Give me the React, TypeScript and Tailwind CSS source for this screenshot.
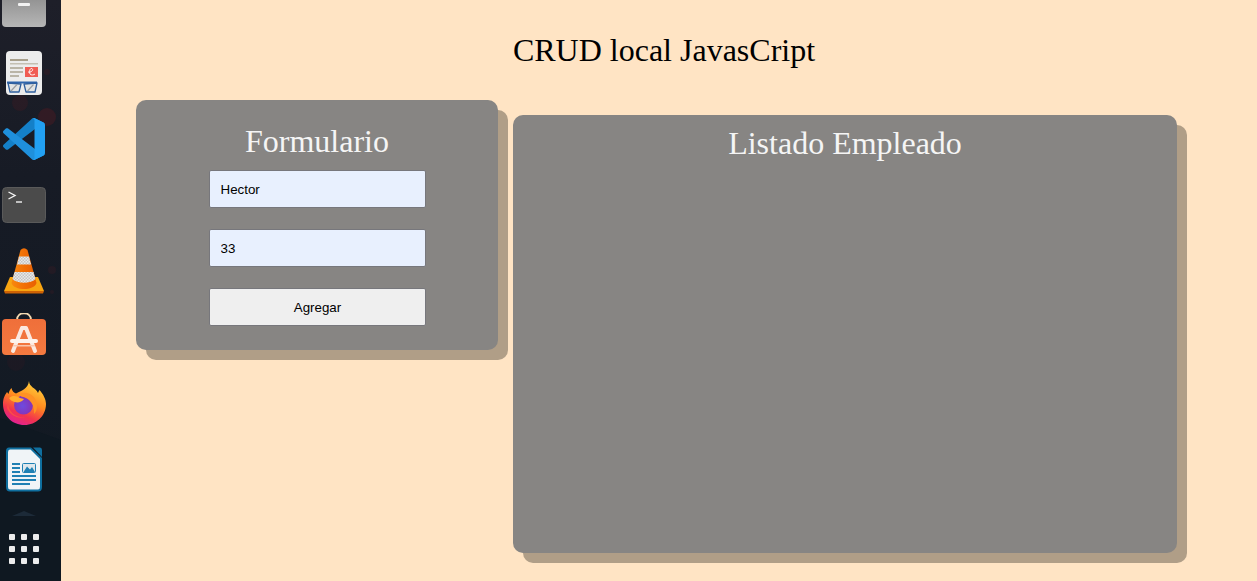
const Dock = () => {
  return (
    <aside className="relative w-[61px] h-[581px] shrink-0 overflow-hidden bg-[#131a24] flex flex-col">
      <svg className="absolute left-0 top-0" width="61" height="581" viewBox="0 0 61 581">
        <defs>
          <linearGradient id="wall" x1="0" y1="0" x2="0" y2="1">
            <stop offset="0" stopColor="#1e1f29" />
            <stop offset="0.3" stopColor="#171b25" />
            <stop offset="0.7" stopColor="#131a24" />
            <stop offset="1" stopColor="#10181f" />
          </linearGradient>
        </defs>
        <rect width="61" height="581" fill="url(#wall)" />
        <circle cx="20" cy="103" r="8" fill="#4a1a22" opacity="0.3" />
        <circle cx="47" cy="117" r="9" fill="#4a1a22" opacity="0.5" />
        <circle cx="47" cy="72" r="3" fill="#4a1a22" opacity="0.3" />
        <circle cx="52" cy="270" r="4" fill="#4a1a22" opacity="0.25" />
        <circle cx="52" cy="292" r="2" fill="#4a1a22" opacity="0.25" />
        <circle cx="16" cy="362" r="9" fill="#3a1a22" opacity="0.2" />
        <path d="M0 418 L61 440 V581 H0Z" fill="#0f1821" />
        <path d="M12 516 L24 511 L36 516Z" fill="#1c2a38" />
      </svg>

      {/* files */}
      <div className="relative h-[66px] w-[48px] mt-[-26px] pt-[9px] shrink-0 flex items-start justify-center">
        <svg width="44" height="44" viewBox="2 -17 44 44">
          <defs>
            <linearGradient id="g1" x1="0" y1="0" x2="0" y2="1">
              <stop offset="0" stopColor="#7f7f7f" />
              <stop offset="1" stopColor="#b6b6b6" />
            </linearGradient>
          </defs>
          <rect x="2" y="-17" width="44" height="44" rx="4" fill="url(#g1)" />
          <rect x="18" y="3" width="12" height="3" rx="1" fill="#f2f2f2" />
        </svg>
      </div>

      {/* document viewer */}
      <div className="relative h-[66px] w-[48px] shrink-0 flex items-center justify-center">
        <svg width="36" height="44" viewBox="6 51 36 44">
          <rect x="6" y="51" width="36" height="44" rx="4" fill="#ececec" />
          <rect x="10" y="59" width="18" height="2" fill="#a89f8b" />
          <rect x="10" y="63" width="28" height="1.500" fill="#c4bfb2" />
          <rect x="10" y="67" width="13" height="2" fill="#bab5a7" />
          <rect x="10" y="71" width="13" height="2" fill="#bab5a7" />
          <rect x="10" y="75" width="9" height="2" fill="#bab5a7" />
          <rect x="25" y="67" width="13" height="10" fill="#f05c52" />
          <path d="M28 72 C31 73 34 70 32 68.5 C30 68 29 71 30 74 C31 75.5 34 75 35 74" fill="none" stroke="#fff" strokeWidth="0.9" />
          <path d="M7 82.5 H37" stroke="#2f66ae" strokeWidth="2" />
          <path d="M8 83 L10 92 H19 L21 84 Z M24 84 L26 92 H35 L37 83 Z" fill="#e2e4e4" stroke="#2f5f9e" strokeWidth="1.300" strokeLinejoin="round" />
          <path d="M11 91 L17 84.500 M27.500 91 L33.500 84.500" stroke="#9a9ea2" strokeWidth="1.200" />
        </svg>
      </div>

      {/* vs code */}
      <div className="relative h-[66px] w-[48px] shrink-0 flex items-center justify-center">
        <svg width="42" height="42" viewBox="0 0 100 100">
          <path
            d="M96.46 10.8 L75.86 0.88 C73.47 -0.27 70.62 0.21 68.75 2.08 L1.3 63.58 C-0.52 65.24 -0.51 68.09 1.3 69.75 L6.81 74.75 C8.3 76.1 10.53 76.2 12.13 74.99 L93.36 13.37 C96.09 11.3 100 13.25 100 16.67 V16.43 C100 14.03 98.62 11.84 96.46 10.8 Z"
            fill="#1480c8"
          />
          <path
            d="M96.46 89.2 L75.86 99.12 C73.47 100.27 70.62 99.79 68.75 97.92 L1.3 36.42 C-0.52 34.76 -0.51 31.91 1.3 30.25 L6.81 25.25 C8.3 23.9 10.53 23.8 12.13 25.01 L93.36 86.63 C96.09 88.7 100 86.75 100 83.33 V83.57 C100 85.97 98.62 88.16 96.46 89.2 Z"
            fill="#1f90dc"
          />
          <path
            d="M75.86 99.13 C73.47 100.27 70.62 99.79 68.75 97.92 C71.06 100.22 75 98.59 75 95.33 V4.67 C75 1.41 71.06 -0.22 68.75 2.08 C70.62 0.21 73.47 -0.27 75.86 0.87 L96.46 10.78 C98.62 11.82 100 14.01 100 16.41 V83.59 C100 85.99 98.62 88.18 96.46 89.22 Z"
            fill="#22a0f2"
          />
        </svg>
      </div>

      {/* terminal */}
      <div className="relative h-[66px] w-[48px] shrink-0 flex items-center justify-center">
        <svg width="44" height="36" viewBox="2 187 44 36">
          <rect x="2.5" y="187.5" width="43" height="35" rx="4" fill="#4b4b4b" stroke="#5a5a5a" />
          <path d="M8.5 192 L15 195.5 L8.5 199" fill="none" stroke="#f4f4f4" strokeWidth="1.4" />
          <path d="M16 202 H22" stroke="#f4f4f4" strokeWidth="1.4" />
        </svg>
      </div>

      {/* vlc */}
      <div className="relative h-[66px] w-[48px] shrink-0 flex items-center justify-center">
        <svg width="40" height="46" viewBox="4 248 40 46">
          <defs>
            <pattern id="check" width="3" height="3" patternUnits="userSpaceOnUse">
              <rect width="3" height="3" fill="#e9e9e9" />
              <rect width="1.5" height="1.5" fill="#c4c4c4" />
              <rect x="1.5" y="1.5" width="1.5" height="1.5" fill="#c4c4c4" />
            </pattern>
            <linearGradient id="cone" x1="0" y1="0" x2="1" y2="0">
              <stop offset="0" stopColor="#f7890f" />
              <stop offset="0.5" stopColor="#f26f05" />
              <stop offset="1" stopColor="#e85f02" />
            </linearGradient>
          </defs>
          <path d="M10 277 H38 L44 291 H4 Z" fill="#f8a511" />
          <path d="M4 291 H44 L43 293.5 H5 Z" fill="#cf6304" />
          <path d="M20.5 250 Q24 246.5 27.5 250 L36.5 283 C34 291 14 291 11.5 283 Z" fill="url(#cone)" />
          <path d="M19 256.5 H29 L31 264.5 H17 Z" fill="url(#check)" />
          <path d="M14.5 272 H33.5 L35.5 279 C31 284 17 284 12.5 279 Z" fill="url(#check)" />
        </svg>
      </div>

      {/* software */}
      <div className="relative h-[66px] w-[48px] shrink-0 flex items-center justify-center">
        <svg width="44" height="48" viewBox="2 313 44 48">
          <defs>
            <linearGradient id="bag" x1="0" y1="0" x2="0" y2="1">
              <stop offset="0" stopColor="#ef6f3a" />
              <stop offset="1" stopColor="#f47a40" />
            </linearGradient>
          </defs>
          <path d="M17 320 C17 311 31 311 31 320" fill="none" stroke="#f4d9b0" strokeWidth="2" />
          <rect x="2" y="319" width="44" height="36" rx="4" fill="url(#bag)" />
          <path d="M22 328 H26 L35 351 M22 328 L13 351" fill="none" stroke="#fbe9e0" strokeWidth="4" strokeLinecap="round" strokeLinejoin="round" />
          <rect x="10" y="339" width="28" height="4" rx="2" fill="#fdf3ec" />
          <rect x="13" y="345" width="22" height="1.600" rx="0.8" fill="#f9c7ad" />
        </svg>
      </div>

      {/* firefox */}
      <div className="relative h-[66px] w-[48px] shrink-0 flex items-center justify-center">
        <svg width="44" height="44" viewBox="2 381 44 44">
          <defs>
            <linearGradient id="fx" x1="0.75" y1="0" x2="0.3" y2="1">
              <stop offset="0" stopColor="#ffd53d" />
              <stop offset="0.45" stopColor="#ff8a1f" />
              <stop offset="0.75" stopColor="#f3344d" />
              <stop offset="1" stopColor="#e0209a" />
            </linearGradient>
            <radialGradient id="globe" cx="0.45" cy="0.55" r="0.6">
              <stop offset="0" stopColor="#6d4be0" />
              <stop offset="1" stopColor="#8a2fb0" />
            </radialGradient>
          </defs>
          <path
            d="M29 381 C29 387 36 388 38 393 C38.5 391.5 39 390.5 39.5 390 C43 394 46 399 46 404 C46 416 36 425 24.5 425 C12 425 3 415.500 3 404 C3 398 5 395 7 392 L8.500 394 C9 391 10.500 389 11.500 388 C12 391 14 393 16 393.500 C21 391 28 389 29 381 Z"
            fill="url(#fx)"
          />
          <circle cx="23.500" cy="405" r="9.500" fill="url(#globe)" />
          <path d="M21 393.500 C28 391 37 396 37 406 C37 409 36 412 34 414 C35 405 30 398 21 396.500 Z" fill="#ff9224" />
          <path d="M9 398 C12 395 17 395.500 20 398 L24 399 C22 402 18 403 14.500 402 C12 401 10 400 9 398 Z" fill="#ffad2e" />
          <path d="M8 404 C9 413 17 418 25 417 C19 419 10 416 7 408 Z" fill="#ff5a3c" opacity="0.7" />
        </svg>
      </div>

      {/* writer */}
      <div className="relative h-[66px] w-[48px] shrink-0 flex items-center justify-center">
        <svg width="36" height="45" viewBox="6 447 36 45">
          <path d="M9 447.500 H31 L42 458 V487 Q42 491.500 38 491.500 H10 Q6 491.500 6 487 V451 Q6 447.500 9 447.500 Z" fill="#0f6f9f" />
          <path d="M10 449.500 H30.500 L40 459 V487 Q40 489.500 38 489.500 H10 Q8 489.500 8 487 V452 Q8 449.500 10 449.500 Z" fill="#f0f4f7" />
          <path d="M33 447.500 H40 Q42 447.500 42 450 V457 Z" fill="#0f6f9f" />
          <rect x="12" y="463" width="8" height="2" fill="#1f80b4" />
          <rect x="12" y="467" width="8" height="2" fill="#1f80b4" />
          <rect x="12" y="471" width="8" height="2" fill="#1f80b4" />
          <rect x="22.500" y="463.500" width="13" height="9" rx="1" fill="#dfe7ec" stroke="#1f80b4" />
          <path d="M23.500 472 L27 466.500 L30 469.500 L32 467 L35 472 Z" fill="#1f80b4" />
          <rect x="12" y="475" width="24" height="2" fill="#1f80b4" />
          <rect x="12" y="479" width="24" height="2" fill="#1f80b4" />
          <rect x="12" y="483" width="18" height="2" fill="#1f80b4" />
        </svg>
      </div>

      {/* show apps */}
      <div className="relative mt-auto h-[64px] w-[48px] shrink-0 flex items-center justify-center">
        <div className="grid grid-cols-3 gap-[6px]">
          {Array.from({ length: 9 }).map((_, i) => (
            <span key={i} className="w-[6px] h-[6px] rounded-[1px] bg-[#ececec]" />
          ))}
        </div>
      </div>
    </aside>
  );
};

const App = () => {
  return (
    <div className="flex w-full h-[581px] overflow-hidden bg-[#ffe4c4] text-black font-['Liberation_Serif',serif]">
      <Dock />
      <main className="flex-1 min-w-0">
        <h1 className="pl-[10px] pt-[32px] h-[100px] text-center text-[32px] leading-[37px]">
          CRUD local JavasCript
        </h1>
        <div className="flex items-start gap-[15px] pl-[75px]">
          <section className="w-[362px] h-[250px] pt-[23px] rounded-[10px] bg-[#878583] shadow-[10px_10px_0_#b09e87] flex flex-col items-center">
            <h2 className="text-[32px] leading-[37px] text-[#f5f5f5] mb-[10px]">Formulario</h2>
            <form className="flex flex-col gap-[21px] font-['Liberation_Sans',sans-serif] text-[13.33px]">
              <input
                type="text"
                defaultValue="Hector"
                className="w-[217px] h-[38px] px-[11px] bg-[#e8f0fe] border border-[#77777c] rounded-[2px] text-black"
              />
              <input
                type="text"
                defaultValue="33"
                className="w-[217px] h-[38px] px-[11px] bg-[#e8f0fe] border border-[#77777c] rounded-[2px] text-black"
              />
              <button
                type="button"
                className="w-[217px] h-[38px] pl-[1px] pt-[1px] bg-[#efefef] border border-[#77777c] rounded-[2px] text-black"
              >
                Agregar
              </button>
            </form>
          </section>
          <section className="w-[664px] h-[438px] mt-[15px] pt-[10px] rounded-[10px] bg-[#878583] shadow-[10px_10px_0_#b09e87] text-center">
            <h2 className="text-[32px] leading-[37px] text-[#f5f5f5]">Listado Empleado</h2>
          </section>
        </div>
      </main>
    </div>
  );
};

export default App;
